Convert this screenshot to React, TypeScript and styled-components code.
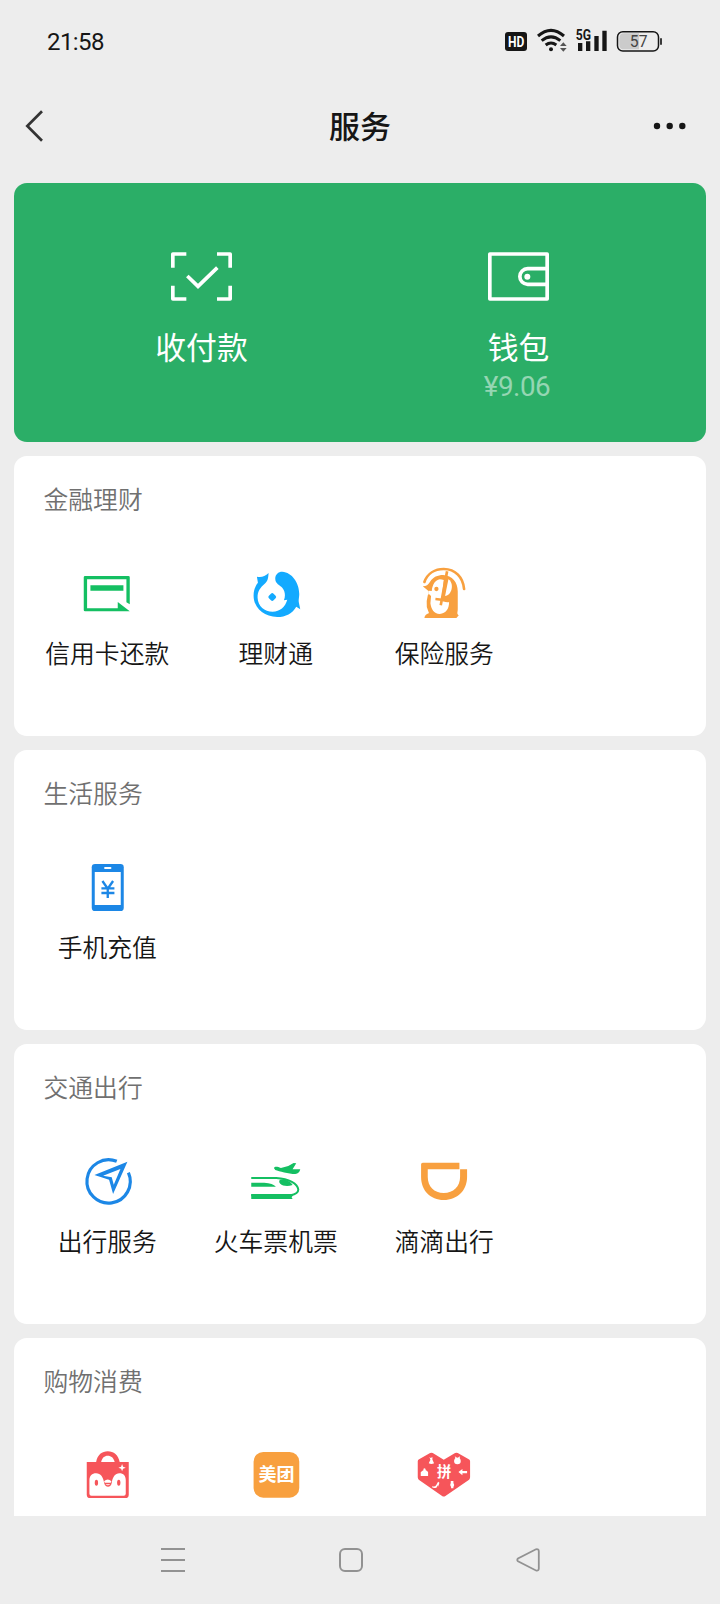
import React from 'react';
import styled, { createGlobalStyle } from 'styled-components';

const GlobalStyle = createGlobalStyle`
  * { box-sizing: border-box; }
  body {
    margin: 0;
    background: #ededed;
    font-family: Roboto, 'Noto Sans CJK SC', sans-serif;
    color: #161616;
  }
  svg { display: block; flex: none; }
`;

const Screen = styled.div`
  width: 720px;
  height: 1604px;
  display: flex;
  flex-direction: column;
  overflow: hidden;
  background: #ededed;
`;

const StatusBar = styled.div`
  flex: none;
  height: 83px;
  padding: 0 57px 0 47px;
  display: flex;
  align-items: center;
  justify-content: space-between;
`;

const Clock = styled.span`
  font-size: 24px;
  letter-spacing: -0.6px;
  line-height: 28px;
`;

const StatusIcons = styled.div`
  display: flex;
  gap: 8px;
  margin-top: -2px;
`;

const Header = styled.header`
  flex: none;
  height: 86px;
  padding: 0 33px 0 22px;
  display: grid;
  grid-template-columns: 100px 1fr 89px;
  align-items: center;
`;

const Title = styled.h1`
  margin: 0;
  padding-top: 4px;
  font-size: 31px;
  font-weight: 500;
  line-height: 40px;
  text-align: center;
`;

const HeaderEnd = styled.div`
  display: flex;
  justify-content: flex-end;
`;

const Content = styled.main`
  flex: none;
  height: 1347px;
  padding: 14px 14px 0;
  display: flex;
  flex-direction: column;
  gap: 14px;
  overflow: hidden;
`;

const PayCard = styled.section`
  flex: none;
  height: 259px;
  padding: 68px 29px 0;
  border-radius: 13px;
  background: #2bae67;
  color: #fff;
  display: grid;
  grid-template-columns: 1fr 1fr;
`;

const PayItem = styled.div`
  display: flex;
  flex-direction: column;
  align-items: center;
`;

const PayLabel = styled.span`
  margin-top: 27px;
  font-size: 30.8px;
  line-height: 40px;
`;

const Amount = styled.span`
  margin-right: 3px;
  font-size: 27.8px;
  line-height: 36px;
  letter-spacing: -0.5px;
  color: rgba(255, 255, 255, 0.5);
`;

const Card = styled.section`
  flex: none;
  height: 280px;
  padding: 29px 9px 0;
  border-radius: 13px;
  background: #fff;
`;

const CardTitle = styled.h2`
  margin: 0 0 47px 20.5px;
  font-size: 24.8px;
  font-weight: 350;
  line-height: 32px;
  color: #707070;
`;

const Grid = styled.div`
  display: grid;
  grid-template-columns: repeat(4, 1fr);
`;

const Service = styled.div`
  display: flex;
  flex-direction: column;
  align-items: center;
`;

const ServiceLabel = styled.span`
  margin-top: 15px;
  font-size: 24.8px;
  font-weight: 350;
  line-height: 32px;
  white-space: nowrap;
`;

const NavBar = styled.nav`
  flex: 1;
  padding: 0 103px 0 84px;
  display: grid;
  grid-template-columns: repeat(3, 1fr);
  align-items: center;
  justify-items: center;
`;

const ServiceIcon = ({ box, children }: { box: string; children: React.ReactNode }) => (
  <svg width="60" height="60" viewBox={`${box} 180 180`}>{children}</svg>
);

const INK = '#161616';
const GREEN = '#14bf62';
const BLUE = '#1c87e6';
const SKY = '#13aaff';
const ORANGE = '#f8a03f';
const RED = '#f6555a';

const CreditCardIcon = () => (
  <ServiceIcon box="141.75 42">
    <path d="M300 163V82q0-4-4-4H166q-4 0-4 4v98q0 4 4 4h134l-36-28v19H172V88h118v69z" fill={GREEN} />
    <path d="M182 106h99v16h-99z" fill={GREEN} />
  </ServiceIcon>
);

const FundIcon = () => (
  <ServiceIcon box="17.25 42">
    <path
      d="M50 80C62 83 74 80 85 69C84 84 83 92 75 100C59 114 52 124 52 143C53 169 73 185 97 185C119 184 135 171 141 149L131 151C136 140 135 123 126 113C119 105 105 101 105 86C105 73 114 65 126 65C155 67 177 98 177 132C177 142 174 151 176 158L180 178L168 170C157 190 136 201 111 201C70 200 40 173 40 137C40 121 45 108 53 98z"
      fill={SKY}
    />
    <path d="M92 131q4-4 8 0l6 6q4 4 0 8l-6 6q-4 4-8 0l-6-6q-4-4 0-8z" fill={SKY} />
  </ServiceIcon>
);

const InsuranceIcon = () => (
  <ServiceIcon box="522.75 42">
    <path d="M554 96C563 70 586 57 612 57C647 57 670 82 673 117" fill="none" stroke={ORANGE} strokeWidth="8" strokeLinecap="round" />
    <path
      d="M549 109C560 109 565 104 571 95C580 81 594 75 610 75C638 76 654 97 654 124V178C654 188 650 191 657 196L650 204H554C555 197 559 192 567 190V124Q560 118 549 109z"
      fill={ORANGE}
    />
    <path
      d="M567 122L576 123C578 103 587 90 600 88Q606 88 612 90L606 144L609 154Q622 158 628 156C628 177 619 190 600 192C582 192 574 177 572 160L574 137H567z"
      fill="#fff"
    />
    <path d="M568 137C561 162 564 180 577 193" fill="none" stroke={ORANGE} strokeWidth="8" strokeLinecap="round" />
    <path d="M626 88C638 96 638 112 634 122C630 132 624 137 616 138z" fill="#fff" />
    <path d="M622 64L603 166" stroke={ORANGE} strokeWidth="8" />
    <path d="M587 147L612 150" stroke={ORANGE} strokeWidth="7" />
    <circle cx="590" cy="117" r="6.5" fill={ORANGE} />
  </ServiceIcon>
);

const PhoneIcon = () => (
  <ServiceIcon box="111.75 54">
    <rect x="156" y="72" width="96" height="141" rx="10" fill={BLUE} />
    <path d="M165 96h78v99h-78z" fill="#fff" />
    <path d="M196 84h16" stroke="#fff" strokeWidth="6" strokeLinecap="round" />
    <path d="M188 123l16 23 16-23M204 144v30M185 145h39M185 159h39" fill="none" stroke={BLUE} strokeWidth="7" />
  </ServiceIcon>
);

const TravelIcon = () => (
  <ServiceIcon box="111.75 36">
    <path d="M231 64A65 65 0 1 0 266 98" fill="none" stroke={BLUE} strokeWidth="9.5" />
    <path d="M164 105L263 65L220 162L208 119zM190 107L216 112L222 134L242 87z" fill={BLUE} fillRule="evenodd" />
  </ServiceIcon>
);

const TrainPlaneIcon = () => (
  <ServiceIcon box="17.25 36">
    <path d="M33 114H108C147 116 172 131 174 148C175 157 166 163 151 166H33" fill="none" stroke={GREEN} strokeWidth="6" />
    <path d="M33 162H162L154 172L157 177H33z" fill={GREEN} />
    <path d="M33 128H72C90 129 101 133 107 140H33z" fill={GREEN} />
    <path d="M119 119C132 116 151 122 157 135C142 140 127 138 120 131C116 128 116 122 119 119z" fill={GREEN} />
    <path d="M101 84C104 78 112 80 122 84L144 78L160 69L168 70L157 88L180 88C178 97 174 101 165 102C145 102 117 94 105 90z" fill={GREEN} />
  </ServiceIcon>
);

const DidiIcon = () => (
  <ServiceIcon box="522.75 36">
    <path d="M549 68H659V88H682V111C682 151 653 180 612 180C572 180 544 151 544 111V73q0-5 5-5zM564 88V111C564 139 583 159 612 159C641 159 661 139 661 111V88z" fill={ORANGE} fillRule="evenodd" />
  </ServiceIcon>
);

const ShoppingIcon = () => (
  <ServiceIcon box="51.75 48">
    <path d="M109 97C113 74 127 64 144 64C162 64 176 75 180 97H165C162 83 154 77 144 77C134 77 127 83 124 97z" fill={RED} />
    <path d="M81 96H207V194q0 10-10 10H91q-10 0-10-10z" fill={RED} />
    <path d="M89 150C89 138 97 130 109 130C123 130 130 141 133 158C136 174 154 174 156 158C159 141 166 130 179 130C191 130 198 138 198 150V191q0 6-6 6H95q-6 0-6-6z" fill="#fff" />
    <ellipse cx="110" cy="158" rx="5" ry="9" fill={RED} />
    <ellipse cx="177" cy="158" rx="5" ry="9" fill={RED} />
    <path d="M133 154Q144 143 155 154L153 158H135zM137 163H152Q144 169 137 163z" fill="#fff" />
    <path d="M187 102L190 110L198 113L190 116L187 124L184 116L176 113L184 110z" fill="#fff" />
  </ServiceIcon>
);

const MeituanIcon = () => (
  <ServiceIcon box="557.25 48">
    <rect x="580" y="66" width="137" height="137" rx="29" fill={ORANGE} />
    <text x="648.5" y="154" textAnchor="middle" fontFamily="'Noto Sans CJK SC', sans-serif" fontWeight="700" fontSize="54" fill="#fff">美团</text>
  </ServiceIcon>
);

const PinduoduoIcon = () => (
  <ServiceIcon box="42.75 33">
    <path d="M91 54q4-2 8 0l33 20 34-20q4-2 8 0l33 19q4 2 4 6v48q0 4-3 7l-71 49q-5 3-10 0l-70-49q-3-3-3-7V79q0-4 4-6z" fill={RED} />
    <text x="133" y="125" textAnchor="middle" fontFamily="'Noto Sans CJK SC', sans-serif" fontWeight="700" fontSize="43" fill="#fff">拼</text>
    <g fill="#fff">
      <path d="M89 66l4 3 5-3v8l5 11q-8 4-16 0l5-11z" />
      <path d="M63 123v-11q4-5 8-6q-1-6 3-6q4 0 4 6q5 1 7 6v11z" />
      <path d="M97 154q9 3 13-5l5-9 4 3-4 13v-6l-5 8q-8 3-13-1z" />
      <path d="M153 138h8v6q5 6 0 12v4h-7v-4q-5-6-1-12z" />
      <path d="M176 111l12-9v6h14v7h-14v6z" />
      <circle cx="173" cy="78" r="10" />
      <path d="M165 64l8 5 8-5-2 8h-11z" />
    </g>
  </ServiceIcon>
);

const sections = [
  {
    title: '金融理财',
    items: [
      { label: '信用卡还款', Icon: CreditCardIcon },
      { label: '理财通', Icon: FundIcon },
      { label: '保险服务', Icon: InsuranceIcon },
    ],
  },
  { title: '生活服务', items: [{ label: '手机充值', Icon: PhoneIcon }] },
  {
    title: '交通出行',
    items: [
      { label: '出行服务', Icon: TravelIcon },
      { label: '火车票机票', Icon: TrainPlaneIcon },
      { label: '滴滴出行', Icon: DidiIcon },
    ],
  },
  {
    title: '购物消费',
    items: [
      { label: '', Icon: ShoppingIcon },
      { label: '', Icon: MeituanIcon },
      { label: '', Icon: PinduoduoIcon },
    ],
  },
];

export default function App() {
  return (
    <Screen>
      <GlobalStyle />
      <StatusBar>
        <Clock>21:58</Clock>
        <StatusIcons>
          <svg width="22" height="25" viewBox="45 54 66 75">
            <rect x="45" y="66" width="66" height="57" rx="9" fill={INK} />
            <text x="78.5" y="111" textAnchor="middle" textLength="49" lengthAdjust="spacingAndGlyphs" fontFamily="Roboto, sans-serif" fontWeight="700" fontSize="44" fill="#fff">HD</text>
          </svg>
          <svg width="33" height="25" viewBox="135 54 99 75">
            <g fill="none" stroke={INK} strokeWidth="9">
              <path d="M144 78Q183 44 222 78" />
              <path d="M155 92Q183 69 211 92" />
              <path d="M167 105Q183 93 199 105" />
            </g>
            <circle cx="183" cy="118" r="6" fill={INK} />
            <path d="M210 108l10-11 10 11zM210 114h20l-10 11z" fill="#555" />
          </svg>
          <svg width="32" height="25" viewBox="258 54 96 75">
            <text x="257" y="90" textLength="46" lengthAdjust="spacingAndGlyphs" fontFamily="Roboto, sans-serif" fontWeight="700" fontSize="43" fill={INK}>5G</text>
            <path d="M264 99h13v24h-13zM288 94h13v29h-13zM313 78h13v45h-13zM337 62h13v61h-13z" fill={INK} />
          </svg>
          <svg width="47" height="25" viewBox="378 54 141 75">
            <rect x="382.5" y="65" width="123" height="58" rx="16" fill="none" stroke={INK} strokeWidth="4.5" />
            <path d="M402 70h45v48h-45q-14 0-14-14V84q0-14 14-14z" fill="#cbcbcb" />
            <path d="M513 85v19" stroke={INK} strokeWidth="5" />
            <text x="446" y="111" textAnchor="middle" fontFamily="Roboto, sans-serif" fontSize="47" fill="#444">57</text>
          </svg>
        </StatusIcons>
      </StatusBar>
      <Header>
        <svg width="24" height="36" viewBox="0 0 24 36">
          <path d="M20 3.2L5.3 18 20 32.8" fill="none" stroke="#333" strokeWidth="2.7" />
        </svg>
        <Title>服务</Title>
        <HeaderEnd>
          <svg width="34" height="8" viewBox="0 0 34 8">
            <circle cx="4" cy="4" r="3.2" fill={INK} />
            <circle cx="16.7" cy="4" r="3.2" fill={INK} />
            <circle cx="29.3" cy="4" r="3.2" fill={INK} />
          </svg>
        </HeaderEnd>
      </Header>
      <Content>
        <PayCard>
          <PayItem>
            <svg width="63" height="51" viewBox="90 48 189 153">
              <g fill="none" stroke="#fff" strokeWidth="11" strokeLinejoin="round">
                <path d="M139 57H98.5V98M231 57H270.5V98M98.5 152V192H139M270.5 152V192H231" />
                <path d="M142 123L174 154L232 98" strokeLinejoin="miter" />
              </g>
            </svg>
            <PayLabel>收付款</PayLabel>
          </PayItem>
          <PayItem>
            <svg width="63" height="51" viewBox="1041 48 189 153">
              <g fill="none" stroke="#fff" strokeWidth="11" strokeLinejoin="round">
                <path d="M1049.5 57H1221.5V192H1049.5z" />
                <path d="M1221 101H1163A23.500 23.500 0 0 0 1163 148H1221" />
              </g>
              <circle cx="1162" cy="125" r="9" fill="#fff" />
            </svg>
            <PayLabel>钱包</PayLabel>
            <Amount>¥9.06</Amount>
          </PayItem>
        </PayCard>
        {sections.map(({ title, items }) => (
          <Card key={title}>
            <CardTitle>{title}</CardTitle>
            <Grid>
              {items.map(({ label, Icon }, i) => (
                <Service key={i}>
                  <Icon />
                  {label && <ServiceLabel>{label}</ServiceLabel>}
                </Service>
              ))}
            </Grid>
          </Card>
        ))}
      </Content>
      <NavBar>
        <svg width="24" height="24" viewBox="0 0 24 24">
          <path d="M0 1h24M0 12h24M0 23h24" stroke="#929292" strokeWidth="2" />
        </svg>
        <svg width="26" height="24" viewBox="0 0 26 24">
          <rect x="3" y="1" width="22" height="22" rx="5" fill="none" stroke="#929292" strokeWidth="2" />
        </svg>
        <svg width="24" height="24" viewBox="0 0 24 24">
          <path d="M20 1.3L2 10.5Q.5 12 2 13.3L20 22.5Q22.8 23.2 22.8 20.5V3.5Q22.8.6 20 1.3z" fill="none" stroke="#929292" strokeWidth="1.8" />
        </svg>
      </NavBar>
    </Screen>
  );
}
